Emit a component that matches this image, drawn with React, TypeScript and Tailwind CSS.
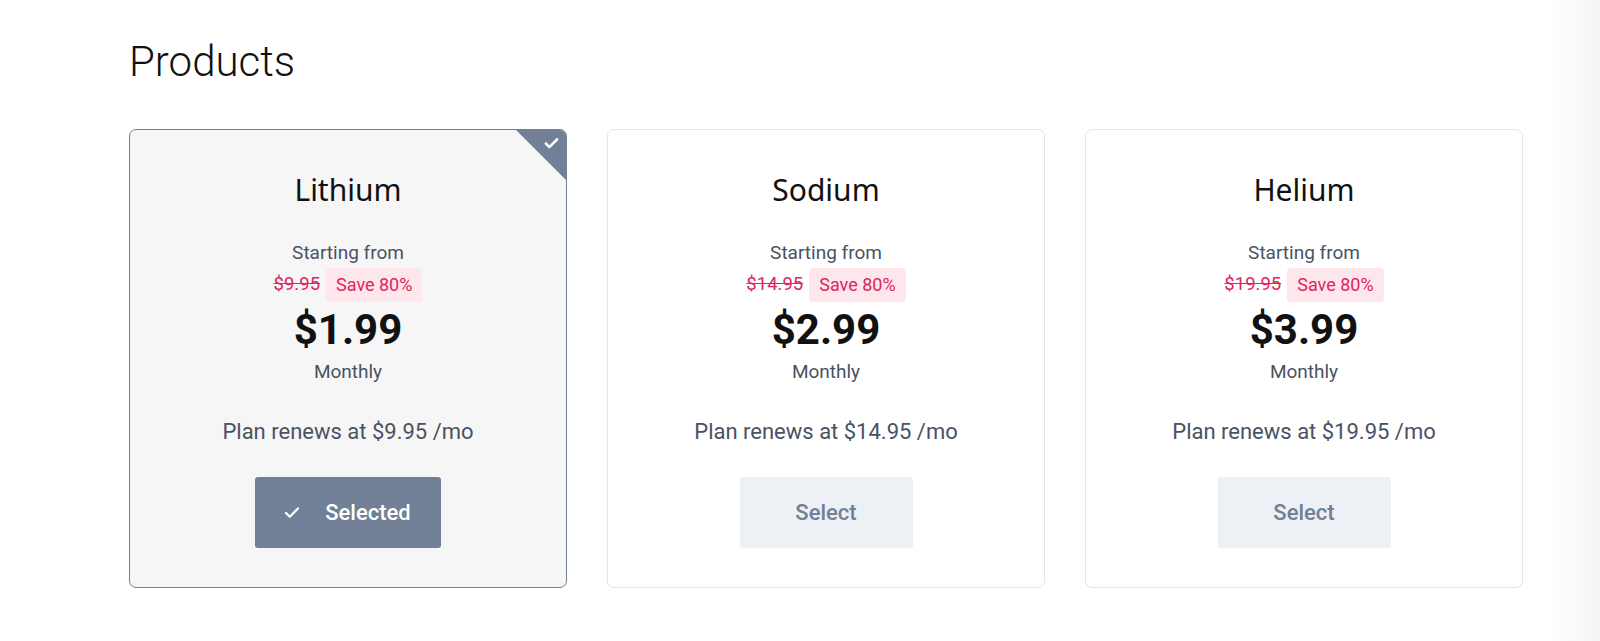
import { Check } from "lucide-react";

type Plan = {
  name: string;
  was: string;
  price: string;
  renews: string;
  selected?: boolean;
};

const plans: Plan[] = [
  { name: "Lithium", was: "$9.95", price: "$1.99", renews: "$9.95", selected: true },
  { name: "Sodium", was: "$14.95", price: "$2.99", renews: "$14.95" },
  { name: "Helium", was: "$19.95", price: "$3.99", renews: "$19.95" },
];

function PlanCard({ plan }: { plan: Plan }) {
  return (
    <div
      className={`relative flex h-[459px] w-[438px] shrink-0 flex-col items-center overflow-hidden rounded-[7px] border ${
        plan.selected ? "border-[#718096] bg-[#f6f6f6]" : "border-[#e4e4e7] bg-white"
      }`}
    >
      {plan.selected && (
        <div className="absolute right-0 top-0 h-[50px] w-[50px] bg-[#718096] [clip-path:polygon(0_0,100%_0,100%_100%)]">
          <Check className="absolute right-[6px] top-[5px] size-[17px] text-white" strokeWidth={3.5} />
        </div>
      )}
      <h2 className="mt-[40px] text-[30px] leading-[40px] text-[#111] font-['Noto_Sans',sans-serif]">
        {plan.name}
      </h2>
      <p className="mt-[31px] text-[19px] leading-6 text-[#4a5263]">Starting from</p>
      <div className="mt-[3px] flex items-center gap-[6px]">
        <span className="text-[18.5px] text-[#e0245e] line-through">{plan.was}</span>
        <span className="rounded-[4px] bg-[#fde7ec] px-[10px] py-[5px] text-[18px] leading-6 text-[#e0245e]">
          Save 80%
        </span>
      </div>
      <p className="mt-[4px] text-[42px] font-bold leading-[48px] text-[#111]">{plan.price}</p>
      <p className="mt-[6px] text-[19px] leading-6 text-[#4a5263]">Monthly</p>
      <p className="mt-[34px] text-[22px] leading-[28px] text-[#4a5263]">
        Plan renews at {plan.renews} /mo
      </p>
      {plan.selected ? (
        <button className="mt-[31px] flex h-[71px] w-[186px] items-center justify-center gap-[24px] rounded-[3px] bg-[#718096] pr-[2px] text-[22px] font-medium text-white">
          <Check className="size-[18px]" strokeWidth={3} />
          Selected
        </button>
      ) : (
        <button className="mt-[31px] flex h-[71px] w-[173px] items-center justify-center rounded-[3px] bg-[#edf0f5] text-[22px] font-medium text-[#718096]">
          Select
        </button>
      )}
    </div>
  );
}

export default function App() {
  return (
    <div className="min-h-[641px] bg-[linear-gradient(to_right,#ffffff_calc(100%-50px),#f4f4f4)] pl-[129px] pt-[37px] font-['Roboto',sans-serif]">
      <h1 className="text-[42px] font-light leading-[50px] text-[#111]">Products</h1>
      <div className="mt-[42px] flex gap-[40px]">
        {plans.map((p) => (
          <PlanCard key={p.name} plan={p} />
        ))}
      </div>
    </div>
  );
}
